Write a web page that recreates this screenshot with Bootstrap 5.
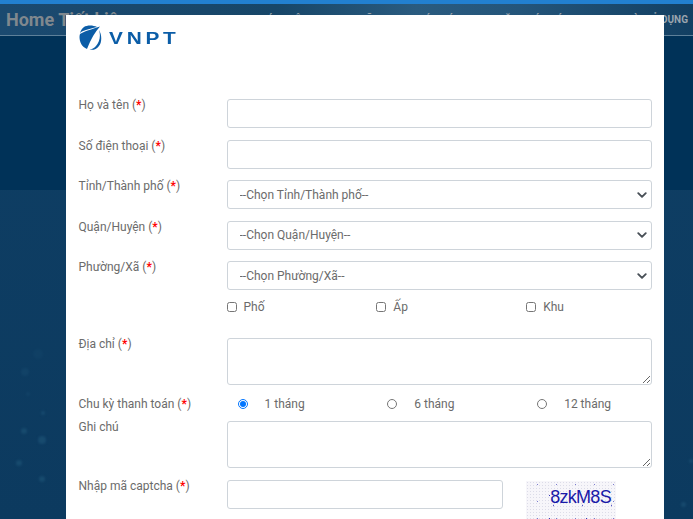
<!DOCTYPE html>
<html lang="vi">
<head>
<meta charset="utf-8">
<title>VNPT</title>
<link rel="stylesheet" href="https://cdn.jsdelivr.net/npm/bootstrap@5.3.0/dist/css/bootstrap.min.css">
<style>
html,body{height:519px;overflow:hidden}
body{background:linear-gradient(#0f3f65,#0c3a5f);font-family:Roboto,"Liberation Sans",sans-serif;font-size:12px;color:#6b6b6b}
.top-strip{height:4px;background:#2280d0}
.site-nav{height:32px;background:linear-gradient(90deg,#1b4a70 0,#174668 40%,#2a5b7f 60%,#24557a 75%,#123f62 100%);border-bottom:1px solid #5e8099;padding:0 5px 0 6px;overflow:hidden}
.site-brand{font-size:18px;font-weight:700;color:#80888e;white-space:nowrap}
.site-links{font-size:10px;font-weight:700;color:#9aa5ae;white-space:nowrap;margin-top:-1px}
.hero-dark{height:154px;background:#003258}
.sky-dot{position:absolute;border-radius:50%;background:#174a6e;filter:blur(1px)}
.sheet{position:absolute;left:66px;top:15px;width:598px;height:520px;background:#fff;border:0;border-radius:0}
.logo-row{height:84px;padding-top:10px;margin-left:1px}
.logo-word{font-family:"Liberation Sans",sans-serif;font-weight:700;font-size:16px;letter-spacing:2.9px;color:#0b5da7;line-height:1;margin:6px 0 0 7px;transform:scaleX(1.3);transform-origin:left center}
.form-row{margin-bottom:11.5px}
.label-col{padding-left:12.5px}
.field-col{padding-left:11px}
.captcha-input-col{padding-right:11px}
.form-label-x{margin:-1px 0 0;line-height:14px;color:#6b6b6b}
.req{color:#f00;font-weight:700}
.form-control.fx,.form-select.fx{height:29px;min-height:29px;font-size:12px;padding:0 12px;border-color:#ced4da;border-radius:3px;color:#6b6b6b}
.form-select.fx{padding-right:24px;background-image:url("data:image/svg+xml,%3csvg xmlns='http://www.w3.org/2000/svg' viewBox='0 0 16 16'%3e%3cpath fill='none' stroke='%23495057' stroke-linecap='round' stroke-linejoin='round' stroke-width='3' d='m2 5 6 6 6-6'/%3e%3c/svg%3e");background-size:10px 10px;background-position:right 4px center}
textarea.form-control.ta-a,textarea.form-control.ta-b{height:47px}
.check-line{height:17px;line-height:17px;margin-top:-3px;margin-bottom:22px}
.check-line input{width:10px;height:10px;margin:0 7px 0 0;vertical-align:-1px}
.radio-line{height:14px;line-height:16px;margin-top:0;margin-bottom:11px}
.radio-line input{width:10px;height:10px;margin:0 17px 0 11px;vertical-align:-1px}
.captcha-box{width:90px;height:40px;margin-top:1px;background-color:#f7f6fa;background-image:radial-gradient(#3a3ab8 .7px,transparent 1px),radial-gradient(#5a5ac4 .7px,transparent 1px),radial-gradient(#7b7bd0 .6px,transparent 1px),radial-gradient(#dcdce8 .5px,transparent .8px);background-size:37px 23px,29px 31px,19px 17px,3px 3px;background-position:5px 3px,13px 9px,2px 12px,0 0;color:#1a1aa8;font-family:"Liberation Sans",sans-serif;font-size:18px;line-height:33px;padding-left:24px;letter-spacing:-.7px;white-space:nowrap}
</style>
</head>
<body>
<div class="top-strip"></div>
<nav class="site-nav d-flex align-items-center justify-content-between">
<span class="site-brand">Home Tiết kiệm</span>
<span class="site-links d-flex">
<span style="margin-right:36px">GIỚI THIỆU</span>
<span style="margin-right:39px">ƯU ĐÃI</span>
<span style="margin-right:37px">GIÁ CƯỚC</span>
<span style="margin-right:42px">ĐĂNG KÝ CƯỚC</span>
<span>NGƯỜI SỬ DỤNG</span>
</span>
</nav>
<div class="hero-dark"></div>
<span class="sky-dot" style="left:33px;top:349px;width:10px;height:10px;opacity:.3"></span>
<span class="sky-dot" style="left:21px;top:368px;width:8px;height:8px;opacity:.5"></span>
<span class="sky-dot" style="left:26px;top:392px;width:4px;height:4px;opacity:.5"></span>
<span class="sky-dot" style="left:41px;top:411px;width:4px;height:4px"></span>
<span class="sky-dot" style="left:21px;top:428px;width:6px;height:6px"></span>
<span class="sky-dot" style="left:38px;top:436px;width:8px;height:8px"></span>
<span class="sky-dot" style="left:16px;top:460px;width:6px;height:6px"></span>
<span class="sky-dot" style="left:39px;top:476px;width:6px;height:6px"></span>
<span class="sky-dot" style="left:689px;top:459px;width:4px;height:4px"></span>
<span class="sky-dot" style="left:681px;top:502px;width:5px;height:5px"></span>

<div class="sheet card">
<div class="container-fluid">
<div class="logo-row d-flex align-items-start">
<svg width="23" height="25" viewBox="0 0 23 25" aria-hidden="true">
<path d="M5 2C8 0 14 0 18 2c-4 1-9 2-14 4-1 .5-2 1-3 2 .5-2 2-4.500 4-6z" fill="#0b5da7"/>
<path d="M.5 12c0-1 .2-2 .5-3C6 6 12 4.500 21 1.500 16 7 12 14 8 24 3 22 .5 17 .5 12z" fill="#0b5da7"/>
<path d="M20 5c2 6 .5 12-3 16-2 2-4 3.500-6.500 3.500 3 1 7 0 9.500-3.500 3-4 3-11 0-16z" fill="#0b5da7"/>
</svg>
<span class="logo-word">VNPT</span>
</div>

<div class="row form-row">
<div class="col-3 label-col"><label class="form-label-x d-block">Họ và tên (<span class="req">*</span>)</label></div>
<div class="col-9 field-col"><input class="form-control fx" type="text"></div>
</div>
<div class="row form-row">
<div class="col-3 label-col"><label class="form-label-x d-block">Số điện thoại (<span class="req">*</span>)</label></div>
<div class="col-9 field-col"><input class="form-control fx" type="text"></div>
</div>
<div class="row form-row">
<div class="col-3 label-col"><label class="form-label-x d-block">Tỉnh/Thành phố (<span class="req">*</span>)</label></div>
<div class="col-9 field-col"><select class="form-select fx"><option>--Chọn Tỉnh/Thành phố--</option></select></div>
</div>
<div class="row form-row">
<div class="col-3 label-col"><label class="form-label-x d-block">Quận/Huyện (<span class="req">*</span>)</label></div>
<div class="col-9 field-col"><select class="form-select fx"><option>--Chọn Quận/Huyện--</option></select></div>
</div>
<div class="row form-row">
<div class="col-3 label-col"><label class="form-label-x d-block">Phường/Xã (<span class="req">*</span>)</label></div>
<div class="col-9 field-col"><select class="form-select fx"><option>--Chọn Phường/Xã--</option></select></div>
</div>
<div class="row check-line">
<div class="col-3"></div>
<div class="col-9 field-col"><div class="row">
<div class="col-4"><label><input type="checkbox">Phố</label></div>
<div class="col-4"><label><input type="checkbox">Ấp</label></div>
<div class="col-4"><label><input type="checkbox">Khu</label></div>
</div></div>
</div>
<div class="row form-row">
<div class="col-3 label-col"><label class="form-label-x d-block">Địa chỉ (<span class="req">*</span>)</label></div>
<div class="col-9 field-col"><textarea class="form-control fx ta-a"></textarea></div>
</div>
<div class="row radio-line">
<div class="col-3 label-col">Chu kỳ thanh toán (<span class="req">*</span>)</div>
<div class="col-9 field-col"><div class="row">
<div class="col-4"><label><input type="radio" name="ck" checked>1 tháng</label></div>
<div class="col-4"><label><input type="radio" name="ck">6 tháng</label></div>
<div class="col-4"><label><input type="radio" name="ck">12 tháng</label></div>
</div></div>
</div>
<div class="row form-row">
<div class="col-3 label-col"><label class="form-label-x d-block">Ghi chú</label></div>
<div class="col-9 field-col"><textarea class="form-control fx ta-b"></textarea></div>
</div>
<div class="row form-row">
<div class="col-3 label-col"><label class="form-label-x d-block">Nhập mã captcha (<span class="req">*</span>)</label></div>
<div class="col-9 field-col"><div class="row">
<div class="col-8 captcha-input-col"><input class="form-control fx" type="text"></div>
<div class="col-4"><div class="captcha-box">8zkM8S</div></div>
</div></div>
</div>
</div>
</div>
<script src="https://cdn.jsdelivr.net/npm/bootstrap@5.3.0/dist/js/bootstrap.bundle.min.js"></script>
</body>
</html>
